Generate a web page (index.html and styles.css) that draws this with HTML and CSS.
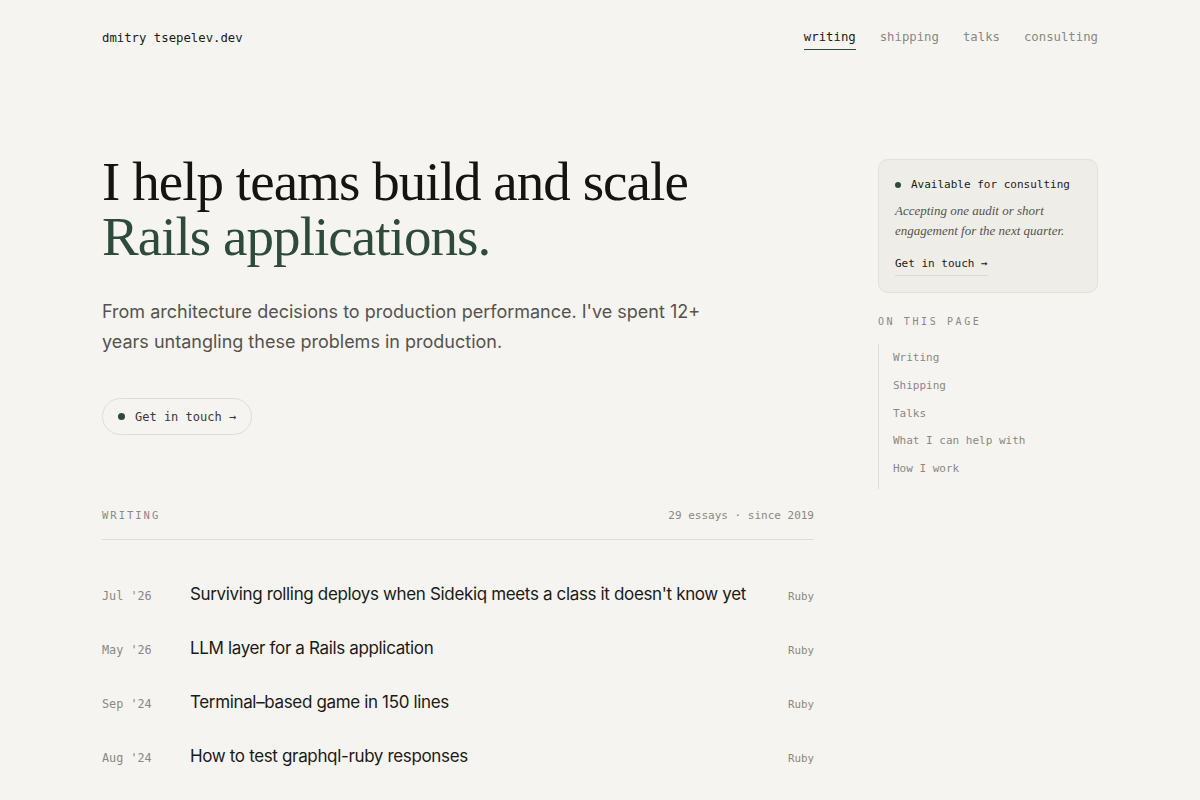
FILE: index.html
```html
<!DOCTYPE html>
<html>
<head>
  <title>dmitry tsepelev.dev</title>
  <link rel="stylesheet" href="styles.css">
</head>
<body>
  <div class="page">
    <header class="topbar">
      <a class="brand" href="#">dmitry tsepelev.dev</a>
      <nav class="nav">
        <a class="nav-link active" href="#">writing</a>
        <a class="nav-link" href="#">shipping</a>
        <a class="nav-link" href="#">talks</a>
        <a class="nav-link" href="#">consulting</a>
      </nav>
    </header>

    <div class="layout">
      <main class="main">
        <section class="hero">
          <h1>I help teams build and scale<br><span class="accent">Rails applications.</span></h1>
          <p class="lead">From architecture decisions to production performance. I've spent 12+ years untangling these problems in production.</p>
          <a class="pill" href="#"><span class="dot"></span>Get in touch →</a>
        </section>

        <section class="writing">
          <div class="section-head">
            <span class="section-label">WRITING</span>
            <span class="section-meta">29 essays · since 2019</span>
          </div>
          <ul class="posts">
            <li class="post">
              <span class="post-date">Jul '26</span>
              <a class="post-title" href="#">Surviving rolling deploys when Sidekiq meets a class it doesn't know yet</a>
              <span class="post-tag">Ruby</span>
            </li>
            <li class="post">
              <span class="post-date">May '26</span>
              <a class="post-title" href="#">LLM layer for a Rails application</a>
              <span class="post-tag">Ruby</span>
            </li>
            <li class="post">
              <span class="post-date">Sep '24</span>
              <a class="post-title" href="#">Terminal–based game in 150 lines</a>
              <span class="post-tag">Ruby</span>
            </li>
            <li class="post">
              <span class="post-date">Aug '24</span>
              <a class="post-title" href="#">How to test graphql-ruby responses</a>
              <span class="post-tag">Ruby</span>
            </li>
          </ul>
        </section>
      </main>

      <aside class="sidebar">
        <div class="card">
          <div class="card-status"><span class="dot"></span>Available for consulting</div>
          <p class="card-text">Accepting one audit or short engagement for the next quarter.</p>
          <a class="card-link" href="#">Get in touch →</a>
        </div>

        <div class="toc">
          <div class="toc-label">ON THIS PAGE</div>
          <ul class="toc-list">
            <li><a href="#">Writing</a></li>
            <li><a href="#">Shipping</a></li>
            <li><a href="#">Talks</a></li>
            <li><a href="#">What I can help with</a></li>
            <li><a href="#">How I work</a></li>
          </ul>
        </div>
      </aside>
    </div>
  </div>
</body>
</html>
```

FILE: styles.css
```css
/* Base */
* {
  box-sizing: border-box;
}

body {
  margin: 0;
  background-color: #f6f4f0;
  color: #1a1a18;
  font-family: Inter, "Noto Sans", sans-serif;
}

a {
  color: inherit;
  text-decoration: none;
}

ul {
  list-style: none;
  margin: 0;
  padding: 0;
}

.page {
  width: 996px;
  margin: 0 auto;
}

/* Header */
.topbar {
  display: flex;
  justify-content: space-between;
  align-items: flex-start;
  padding-top: 30px;
  height: 60px;
}

.brand {
  font-family: "DejaVu Sans Mono", monospace;
  font-size: 12.3px;
  color: #1a1a18;
  margin-top: 1px;
}

.nav {
  display: flex;
  gap: 24px;
}

.nav-link {
  font-family: "DejaVu Sans Mono", monospace;
  font-size: 12.3px;
  color: #8a8883;
  padding-bottom: 5px;
  border-bottom: 1px solid transparent;
}

.nav-link.active {
  color: #1a1a18;
  border-bottom-color: #2d4a3b;
}

/* Layout */
.layout {
  display: flex;
  gap: 64px;
  padding-top: 99px;
}

.main {
  width: 712px;
}

.sidebar {
  width: 220px;
}

/* Hero */
h1 {
  margin: -5px 0 0;
  font-family: "Liberation Serif", serif;
  font-weight: normal;
  font-size: 55px;
  line-height: 55px;
  letter-spacing: -0.95px;
  color: #141412;
}

.accent {
  color: #2d4a3b;
}

.lead {
  margin: 33px 0 0;
  width: 610px;
  font-size: 18px;
  line-height: 30px;
  color: #55534e;
}

.pill {
  display: inline-flex;
  align-items: center;
  gap: 10px;
  margin-top: 41px;
  height: 37px;
  padding: 0 15px 0 15px;
  border: 1px solid #e0ddd6;
  border-radius: 20px;
  font-family: "DejaVu Sans Mono", monospace;
  font-size: 12px;
  color: #3a3935;
}

.dot {
  display: inline-block;
  width: 7px;
  height: 7px;
  border-radius: 50%;
  background-color: #2d4a3b;
}

/* Writing */
.writing {
  margin-top: 74px;
}

.section-head {
  display: flex;
  justify-content: space-between;
  align-items: baseline;
  padding-bottom: 17px;
  border-bottom: 1px solid #e0ddd6;
}

.section-label {
  font-family: "DejaVu Sans Mono", monospace;
  font-size: 10.5px;
  letter-spacing: 2px;
  color: #8a8883;
}

.section-meta {
  font-family: "DejaVu Sans Mono", monospace;
  font-size: 11px;
  color: #8a8883;
}

.posts {
  padding-top: 30px;
}

.post {
  display: flex;
  align-items: baseline;
  height: 54px;
  padding-top: 14px;
}

.post-date {
  width: 88px;
  flex-shrink: 0;
  font-family: "DejaVu Sans Mono", monospace;
  font-size: 11.8px;
  color: #8a8883;
}

.post-title {
  flex: 1;
  font-size: 17px;
  letter-spacing: -0.35px;
  color: #1a1a18;
}

.post-tag {
  font-family: "DejaVu Sans Mono", monospace;
  font-size: 10.8px;
  color: #8a8883;
}

/* Sidebar */
.card {
  padding: 18px 16px 16px;
  background-color: #efede8;
  border: 1px solid #e3e0da;
  border-radius: 10px;
}

.card-status {
  display: flex;
  align-items: center;
  gap: 10px;
  font-family: "DejaVu Sans Mono", monospace;
  font-size: 11px;
  color: #1a1a18;
}

.card-status .dot {
  width: 6px;
  height: 6px;
}

.card-text {
  margin: 10px 0 0;
  font-family: "Liberation Serif", serif;
  font-style: italic;
  font-size: 13px;
  line-height: 20px;
  color: #55534e;
}

.card-link {
  display: inline-block;
  margin-top: 16px;
  padding-bottom: 5px;
  border-bottom: 1px solid #dcd9d2;
  font-family: "DejaVu Sans Mono", monospace;
  font-size: 11px;
  color: #1a1a18;
}

.toc {
  margin-top: 23px;
}

.toc-label {
  font-family: "DejaVu Sans Mono", monospace;
  font-size: 10px;
  letter-spacing: 2.6px;
  color: #8a8883;
}

.toc-list {
  margin-top: 17px;
  padding: 6px 0 0 14px;
  border-left: 1px solid #e0ddd6;
}

.toc-list li {
  height: 27.8px;
  font-family: "DejaVu Sans Mono", monospace;
  font-size: 11px;
  line-height: 16px;
  color: #8a8883;
}
```
